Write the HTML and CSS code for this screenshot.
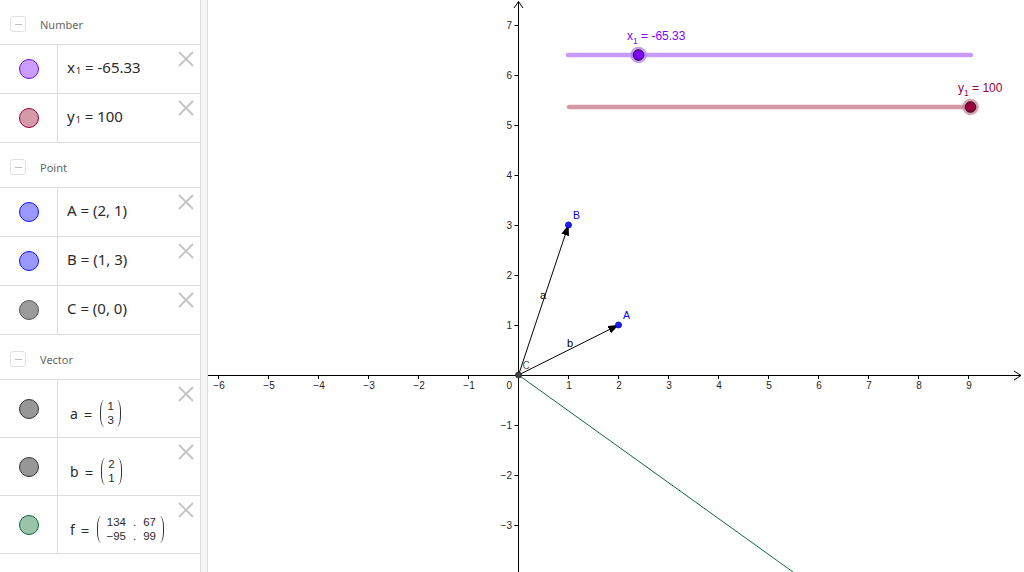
FILE: index.html
```html
<!DOCTYPE html>
<html lang="en">
<head>
<meta charset="utf-8">
<title>Vectors</title>
<link rel="stylesheet" href="styles.css">
</head>
<body>
<div class="app">
  <aside class="algebra">
    <section class="group">
      <div class="group-head"><span class="toggle"></span><span class="group-title">Number</span></div>
      <div class="item">
        <div class="marble-cell"><span class="marble m-x1"></span></div>
        <div class="formula"><span class="expr">x<sub>1</sub> = -65.33</span></div>
        <svg class="close" viewBox="0 0 16 16"><path d="M1 1 L15 15 M15 1 L1 15"/></svg>
      </div>
      <div class="item">
        <div class="marble-cell"><span class="marble m-y1"></span></div>
        <div class="formula"><span class="expr">y<sub>1</sub> = 100</span></div>
        <svg class="close" viewBox="0 0 16 16"><path d="M1 1 L15 15 M15 1 L1 15"/></svg>
      </div>
    </section>
    <section class="group">
      <div class="group-head"><span class="toggle"></span><span class="group-title">Point</span></div>
      <div class="item">
        <div class="marble-cell"><span class="marble m-pt"></span></div>
        <div class="formula"><span class="expr">A = (2, 1)</span></div>
        <svg class="close" viewBox="0 0 16 16"><path d="M1 1 L15 15 M15 1 L1 15"/></svg>
      </div>
      <div class="item">
        <div class="marble-cell"><span class="marble m-pt"></span></div>
        <div class="formula"><span class="expr">B = (1, 3)</span></div>
        <svg class="close" viewBox="0 0 16 16"><path d="M1 1 L15 15 M15 1 L1 15"/></svg>
      </div>
      <div class="item">
        <div class="marble-cell"><span class="marble m-c"></span></div>
        <div class="formula"><span class="expr">C = (0, 0)</span></div>
        <svg class="close" viewBox="0 0 16 16"><path d="M1 1 L15 15 M15 1 L1 15"/></svg>
      </div>
    </section>
    <section class="group">
      <div class="group-head"><span class="toggle"></span><span class="group-title">Vector</span></div>
      <div class="item item-vec">
        <div class="marble-cell"><span class="marble m-vec"></span></div>
        <div class="formula formula-vec">
          <span class="lhs">a</span><span class="eq">=</span>
          <span class="matrix"><span class="paren paren-l"></span><span class="cols"><span class="col"><span>1</span><span>3</span></span></span><span class="paren paren-r"></span></span>
        </div>
        <svg class="close" viewBox="0 0 16 16"><path d="M1 1 L15 15 M15 1 L1 15"/></svg>
      </div>
      <div class="item item-vec">
        <div class="marble-cell"><span class="marble m-vec"></span></div>
        <div class="formula formula-vec">
          <span class="lhs">b</span><span class="eq">=</span>
          <span class="matrix"><span class="paren paren-l"></span><span class="cols"><span class="col"><span>2</span><span>1</span></span></span><span class="paren paren-r"></span></span>
        </div>
        <svg class="close" viewBox="0 0 16 16"><path d="M1 1 L15 15 M15 1 L1 15"/></svg>
      </div>
      <div class="item item-vec">
        <div class="marble-cell"><span class="marble m-f"></span></div>
        <div class="formula formula-vec">
          <span class="lhs">f</span><span class="eq">=</span>
          <span class="matrix"><span class="paren paren-l"></span><span class="cols cols-wide"><span class="col col-num"><span>134</span><span>−95</span></span><span class="col"><span>.</span><span>.</span></span><span class="col col-num"><span>67</span><span>99</span></span></span><span class="paren paren-r"></span></span>
        </div>
        <svg class="close" viewBox="0 0 16 16"><path d="M1 1 L15 15 M15 1 L1 15"/></svg>
      </div>
    </section>
  </aside>
  <div class="splitter"></div>
  <main class="graphics">
    <svg class="plot" width="816" height="572" viewBox="208 0 816 572">
      <defs>
        <marker id="head" markerUnits="userSpaceOnUse" viewBox="0 0 11 8" markerWidth="11" markerHeight="8" refX="10.5" refY="4" orient="auto">
          <path d="M0 0 L11 4 L0 8 Z" fill="#000"/>
        </marker>
      </defs>

      <!-- sliders -->
      <line x1="568" y1="55" x2="971" y2="55" stroke="#ca9bff" stroke-width="4.5" stroke-linecap="round"/>
      <line x1="569" y1="107" x2="970" y2="107" stroke="#d599a6" stroke-width="4.5" stroke-linecap="round"/>

      <!-- line f -->
      <line x1="518.5" y1="375" x2="793" y2="572" stroke="#0b6a3a" stroke-width="1"/>

      <!-- axes -->
      <g stroke="#000" stroke-width="1" fill="none">
        <path d="M208 375.5 H1021"/>
        <path d="M1014 371 L1021 375.5 L1014 380"/>
        <path d="M518.5 572 V1.5"/>
        <path d="M514 8 L518.5 1.5 L523 8"/>
        <path d="M218.5 375 V379 M268.5 375 V379 M318.5 375 V379 M368.5 375 V379 M418.5 375 V379 M468.5 375 V379 M568.5 375 V379 M618.5 375 V379 M668.5 375 V379 M718.5 375 V379 M768.5 375 V379 M818.5 375 V379 M868.5 375 V379 M918.5 375 V379 M968.5 375 V379"/>
        <path d="M514.5 25.5 H518 M514.5 75.5 H518 M514.5 125.5 H518 M514.5 175.5 H518 M514.5 225.5 H518 M514.5 275.5 H518 M514.5 325.5 H518 M514.5 425.5 H518 M514.5 475.5 H518 M514.5 525.5 H518"/>
      </g>

      <g class="tick-label" text-anchor="middle">
        <text x="219" y="389">−6</text>
        <text x="269" y="389">−5</text>
        <text x="319" y="389">−4</text>
        <text x="369" y="389">−3</text>
        <text x="419" y="389">−2</text>
        <text x="469" y="389">−1</text>
        <text x="569" y="389">1</text>
        <text x="619" y="389">2</text>
        <text x="669" y="389">3</text>
        <text x="719" y="389">4</text>
        <text x="769" y="389">5</text>
        <text x="819" y="389">6</text>
        <text x="869" y="389">7</text>
        <text x="919" y="389">8</text>
        <text x="969" y="389">9</text>
      </g>
      <g class="tick-label" text-anchor="end">
        <text x="512" y="389">0</text>
        <text x="512" y="28.8">7</text>
        <text x="512" y="78.8">6</text>
        <text x="512" y="128.8">5</text>
        <text x="512" y="178.8">4</text>
        <text x="512" y="228.8">3</text>
        <text x="512" y="278.8">2</text>
        <text x="512" y="328.8">1</text>
        <text x="512" y="428.8">−1</text>
        <text x="512" y="478.8">−2</text>
        <text x="512" y="528.8">−3</text>
      </g>

      <!-- vectors -->
      <line x1="518.5" y1="375" x2="568.5" y2="225" stroke="#000" stroke-width="1" marker-end="url(#head)"/>
      <line x1="518.5" y1="375" x2="618.5" y2="325" stroke="#000" stroke-width="1" marker-end="url(#head)"/>

      <!-- points -->
      <circle cx="568.5" cy="225" r="3" fill="#1f1fff" stroke="#0000b0" stroke-width="0.8"/>
      <circle cx="618.5" cy="325" r="3" fill="#1f1fff" stroke="#0000b0" stroke-width="0.8"/>
      <circle cx="518.5" cy="375" r="3" fill="#444" stroke="#222" stroke-width="0.8"/>

      <!-- slider handles -->
      <circle cx="638.5" cy="55" r="8.3" fill="#b27fe8" opacity="0.75"/>
      <circle cx="638.5" cy="55" r="5.3" fill="#7f00ff" stroke="#1a1a1a" stroke-width="1"/>
      <circle cx="970.5" cy="107" r="8.3" fill="#c98496" opacity="0.75"/>
      <circle cx="970.5" cy="107" r="5.3" fill="#99003d" stroke="#1a1a1a" stroke-width="1"/>

      <!-- labels -->
      <text class="slider-label lbl-x1" x="627" y="40">x<tspan class="sub" dy="4">1</tspan><tspan dy="-4"> = -65.33</tspan></text>
      <text class="slider-label lbl-y1" x="958" y="92">y<tspan class="sub" dy="4">1</tspan><tspan dy="-4"> = 100</tspan></text>
      <text class="pt-label" x="623" y="319">A</text>
      <text class="pt-label" x="573" y="219">B</text>
      <text class="c-label" x="522.5" y="368.5">C</text>
      <text class="vec-label" x="540" y="299">a</text>
      <text class="vec-label" x="567" y="346.5">b</text>
    </svg>
  </main>
</div>
</body>
</html>
```

FILE: styles.css
```css
html, body {
  margin: 0;
  padding: 0;
  background: #fff;
}

body {
  width: 1024px;
  height: 572px;
  overflow: hidden;
  font-family: "Noto Sans", "Open Sans", sans-serif;
  color: #333;
}

.app {
  display: flex;
  height: 572px;
}

/* ---------- algebra view ---------- */
.algebra {
  width: 200px;
  flex: none;
  background: #fff;
  display: flex;
  flex-direction: column;
}

.group-head {
  height: 44px;
  box-sizing: border-box;
  padding-top: 4px;
  padding-left: 10px;
  display: flex;
  align-items: center;
}

.toggle {
  width: 16px;
  height: 16px;
  box-sizing: border-box;
  border: 1px solid #e2e2e2;
  border-radius: 3px;
  display: flex;
  align-items: center;
  justify-content: center;
  margin-right: 14px;
}

.toggle::before {
  content: "";
  width: 7px;
  height: 1px;
  background: #bdbdbd;
}

.group-title {
  font-size: 11px;
  color: #666;
}

.item {
  position: relative;
  height: 48px;
  border-top: 1px solid #dcdcdc;
  display: flex;
}

.item-vec {
  height: 57px;
}

.item:last-child {
  border-bottom: 1px solid #dcdcdc;
}

.marble-cell {
  width: 57px;
  flex: none;
  border-right: 1px solid #dcdcdc;
  display: flex;
  align-items: center;
  justify-content: center;
}

.marble {
  width: 20px;
  height: 20px;
  box-sizing: border-box;
  border-radius: 50%;
  border: 1px solid #333;
}

.m-x1 { background: #cc9cff; border-color: #6a12d8; }
.m-y1 { background: #d699a8; border-color: #99003d; }
.m-pt { background: #9999ff; border-color: #1010ff; }
.m-c  { background: #9b9b9b; border-color: #555; }
.m-vec { background: #979797; border-color: #333; }
.m-f  { background: #99c4a8; border-color: #0b6a3a; }

.formula {
  display: flex;
  align-items: center;
  padding-left: 9px;
  padding-bottom: 5px;
  font-size: 15px;
  color: #2b2b2b;
}

.expr {
  white-space: pre;
}

.expr sub {
  font-size: 9px;
  vertical-align: -1px;
  line-height: 0;
  margin-left: 1px;
}

.formula-vec {
  padding-left: 12px;
  padding-top: 10px;
  padding-bottom: 0;
}

.formula-vec .lhs {
  font-size: 14px;
}

.formula-vec .eq {
  font-size: 15px;
  margin: 0 6px 0 6px;
}

.matrix {
  display: flex;
  align-items: center;
  height: 28px;
  margin-left: 2px;
}

.paren {
  width: 4px;
  height: 27px;
  box-sizing: border-box;
}

.paren-l {
  border-left: 1.4px solid #333;
  border-radius: 5px 0 0 5px / 14px 0 0 14px;
}

.paren-r {
  border-right: 1.4px solid #333;
  border-radius: 0 5px 5px 0 / 0 14px 14px 0;
}

.cols {
  display: flex;
  gap: 8px;
  padding: 0 3px;
}

.cols-wide {
  padding: 0 4px 0 5px;
  gap: 7px;
}

.col {
  display: flex;
  flex-direction: column;
  align-items: center;
  font-family: "Liberation Sans", Arial, sans-serif;
  font-size: 11.5px;
  line-height: 13.5px;
}

.col-num {
  align-items: flex-end;
}

.close {
  position: absolute;
  top: 6px;
  right: 6px;
  width: 16px;
  height: 16px;
}

.close path {
  stroke: #c4c4c4;
  stroke-width: 1.8;
  fill: none;
}

/* ---------- splitter ---------- */
.splitter {
  width: 6px;
  flex: none;
  border-left: 1px solid #dedede;
  border-right: 1px solid #dedede;
  background: #f5f5f5;
}

/* ---------- graphics view ---------- */
.graphics {
  flex: 1;
  overflow: hidden;
  background: #fff;
}

.plot {
  display: block;
}

.tick-label {
  font-family: "Liberation Sans", Arial, sans-serif;
  font-size: 10px;
  fill: #1e1e1e;
}

.slider-label {
  font-family: "Liberation Sans", Arial, sans-serif;
  font-size: 12px;
}

.slider-label .sub {
  font-size: 8.5px;
}

.lbl-x1 { fill: #7f00ff; }
.lbl-y1 { fill: #99003d; }

.pt-label {
  font-family: "Liberation Sans", Arial, sans-serif;
  font-size: 10.5px;
  fill: #0000ff;
}

.c-label {
  font-family: "Liberation Sans", Arial, sans-serif;
  font-size: 10px;
  fill: #555;
}

.vec-label {
  font-family: "Liberation Sans", Arial, sans-serif;
  font-size: 11px;
  fill: #000;
}
```
